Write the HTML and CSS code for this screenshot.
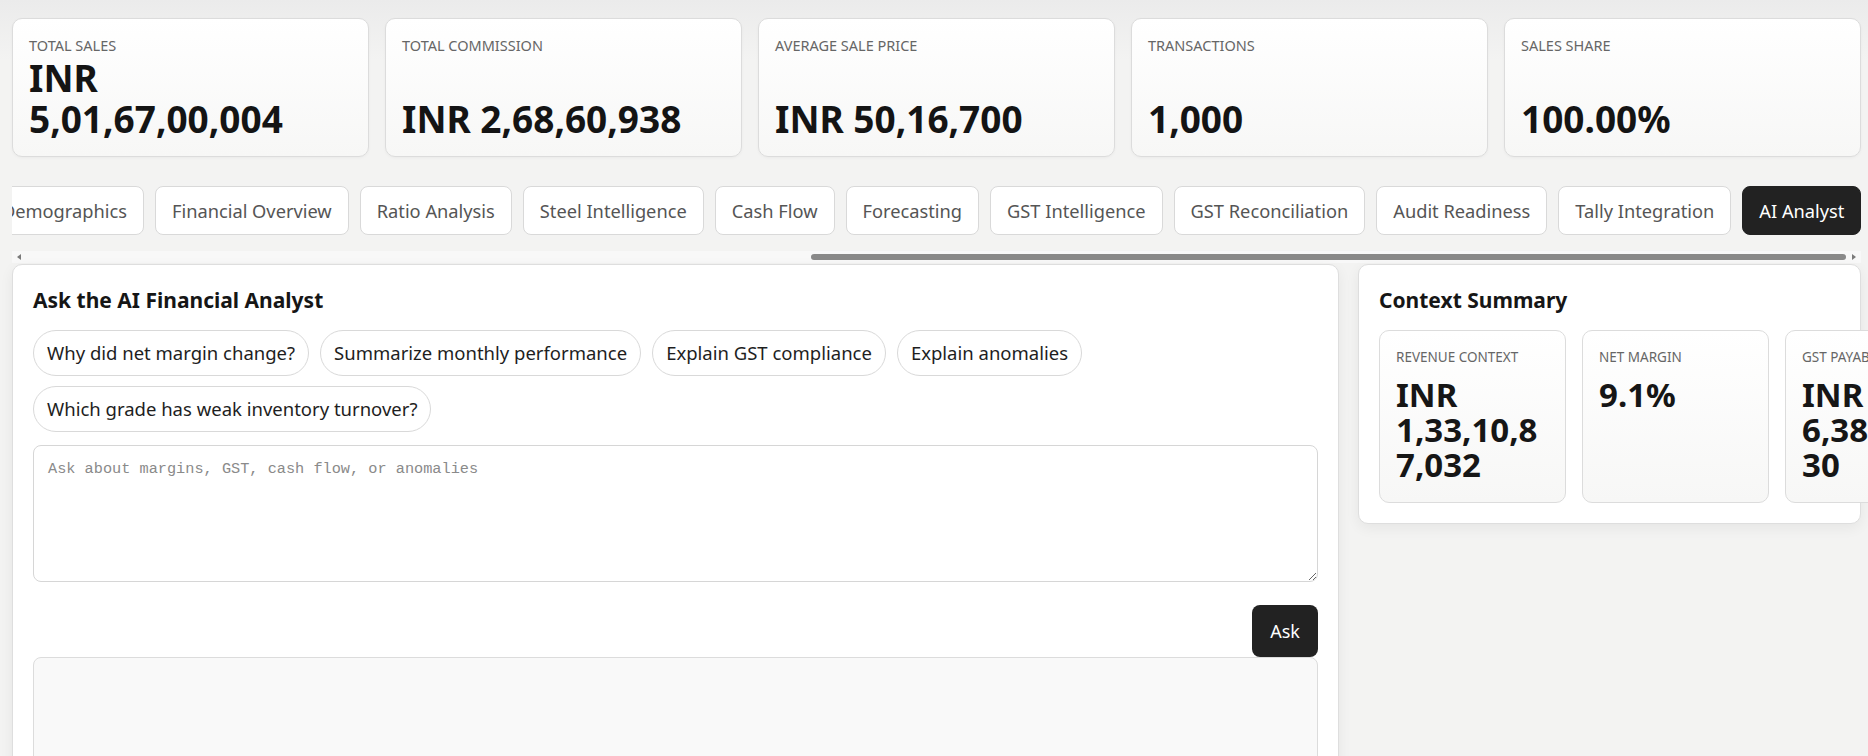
FILE: index.html
```html
<!DOCTYPE html>
<html lang="en">
<head>
    <meta charset="UTF-8">
    <meta name="viewport" content="width=device-width, initial-scale=1.0">
    <title>Sales Dashboard - AI Analyst</title>
    <link rel="stylesheet" href="styles.css">
</head>
<body>
    <div class="metrics">
        <div class="metric">
            <div class="metric-label">Total Sales</div>
            <div class="metric-value">INR<br>5,01,67,00,004</div>
        </div>
        <div class="metric">
            <div class="metric-label">Total Commission</div>
            <div class="metric-value">INR 2,68,60,938</div>
        </div>
        <div class="metric">
            <div class="metric-label">Average Sale Price</div>
            <div class="metric-value">INR 50,16,700</div>
        </div>
        <div class="metric">
            <div class="metric-label">Transactions</div>
            <div class="metric-value">1,000</div>
        </div>
        <div class="metric">
            <div class="metric-label">Sales Share</div>
            <div class="metric-value">100.00%</div>
        </div>
    </div>

    <div class="tab-strip">
        <nav class="tabs" id="tabs">
            <button class="tab">Overview</button>
            <button class="tab">Sales Trends</button>
            <button class="tab">Agent Performance</button>
            <button class="tab">Commission</button>
            <button class="tab">Product Mix</button>
            <button class="tab">Pricing Analysis</button>
            <button class="tab">Regional Analysis</button>
            <button class="tab">Customer Segments</button>
            <button class="tab">Demographics</button>
            <button class="tab">Financial Overview</button>
            <button class="tab">Ratio Analysis</button>
            <button class="tab">Steel Intelligence</button>
            <button class="tab">Cash Flow</button>
            <button class="tab">Forecasting</button>
            <button class="tab">GST Intelligence</button>
            <button class="tab">GST Reconciliation</button>
            <button class="tab">Audit Readiness</button>
            <button class="tab">Tally Integration</button>
            <button class="tab active">AI Analyst</button>
        </nav>
        <div class="scrollbar">
            <span class="arrow arrow-left"></span>
            <div class="track"><div class="thumb" id="thumb"></div></div>
            <span class="arrow arrow-right"></span>
        </div>
    </div>

    <div class="workspace">
        <section class="panel">
            <h2>Ask the AI Financial Analyst</h2>
            <div class="chips">
                <button class="chip">Why did net margin change?</button>
                <button class="chip">Summarize monthly performance</button>
                <button class="chip">Explain GST compliance</button>
                <button class="chip">Explain anomalies</button>
                <button class="chip">Which grade has weak inventory turnover?</button>
            </div>
            <textarea class="question" placeholder="Ask about margins, GST, cash flow, or anomalies"></textarea>
            <div class="ask-row">
                <button class="ask-button">Ask</button>
            </div>
            <div class="answer"></div>
        </section>

        <section class="panel">
            <h2>Context Summary</h2>
            <div class="context-grid">
                <div class="context-card">
                    <div class="context-label">Revenue Context</div>
                    <div class="context-value">INR 1,33,10,87,032</div>
                </div>
                <div class="context-card">
                    <div class="context-label">Net Margin</div>
                    <div class="context-value">9.1%</div>
                </div>
                <div class="context-card">
                    <div class="context-label">GST Payable</div>
                    <div class="context-value">INR 6,38,54,530</div>
                </div>
            </div>
        </section>
    </div>

    <script>
        const tabs = document.getElementById('tabs');
        const thumb = document.getElementById('thumb');

        // sync the scroll indicator with the tab strip
        function updateThumb() {
            const track = thumb.parentElement.clientWidth;
            const ratio = tabs.clientWidth / tabs.scrollWidth;
            thumb.style.width = (track * ratio) + 'px';
            thumb.style.left = (tabs.scrollLeft / tabs.scrollWidth * track) + 'px';
        }

        tabs.addEventListener('scroll', updateThumb);
        // keep the active tab in view
        tabs.scrollLeft = tabs.scrollWidth;
        updateThumb();
    </script>
</body>
</html>
```

FILE: styles.css
```css
html {
    overflow-x: hidden;
}
body {
    margin: 0;
    padding: 18px 7px 0 12px;
    font-family: "Noto Sans", "Open Sans", sans-serif;
    color: #161616;
    background: linear-gradient(to bottom, #ebebeb 0, #f3f3f2 60px, #f3f3f2 100%);
    min-height: 100vh;
    box-sizing: border-box;
}
button {
    font-family: inherit;
}

/* top metric cards */
.metrics {
    display: grid;
    grid-template-columns: repeat(5, minmax(0, 1fr));
    gap: 16px;
}
.metric {
    display: flex;
    flex-direction: column;
    justify-content: space-between;
    gap: 1px;
    padding: 16px 16px 17px;
    border: 1px solid #dcdcdc;
    border-radius: 10px;
    background: linear-gradient(to bottom, #ffffff, #f7f7f6);
    box-shadow: 0 1px 3px rgba(0, 0, 0, 0.04);
}
.metric-label {
    font-size: 14.5px;
    line-height: 21px;
    text-transform: uppercase;
    color: #666;
}
.metric-value {
    font-size: 37px;
    line-height: 41px;
    font-weight: 700;
    color: #141414;
}

/* tab strip */
.tab-strip {
    margin-top: 29px;
}
.tabs {
    display: flex;
    gap: 11px;
    overflow-x: auto;
    scrollbar-width: none;
}
.tabs::-webkit-scrollbar {
    display: none;
}
.tab {
    flex: none;
    padding: 11px 16px;
    font-size: 18.25px;
    line-height: 25px;
    color: #555;
    background: #fff;
    border: 1px solid #d9d9d9;
    border-radius: 8px;
    cursor: pointer;
    white-space: nowrap;
}
.tab.active {
    background: #222;
    border-color: #222;
    color: #fff;
}
.scrollbar {
    display: flex;
    align-items: center;
    height: 12px;
    margin-top: 16px;
    background: #f8f8f8;
}
.arrow {
    flex: none;
    width: 12px;
    height: 12px;
    display: flex;
    align-items: center;
    justify-content: center;
}
.arrow::before {
    content: "";
    border-top: 3px solid transparent;
    border-bottom: 3px solid transparent;
}
.arrow-left::before {
    border-right: 4px solid #7a7a7a;
    margin-left: 2px;
}
.arrow-right::before {
    border-left: 4px solid #7a7a7a;
    margin-right: 2px;
}
.track {
    flex: 1;
    position: relative;
    height: 6px;
    margin: 0 3px 0 0;
}
.thumb {
    position: absolute;
    top: 0;
    height: 6px;
    border-radius: 3px;
    background: #898989;
}

/* analyst + context */
.workspace {
    display: grid;
    grid-template-columns: minmax(0, 1fr) 503px;
    gap: 19px;
    align-items: start;
    margin-top: 1px;
}
.panel {
    padding: 20px;
    background: #fff;
    border: 1px solid #dedede;
    border-radius: 10px;
    box-shadow: 0 4px 14px rgba(0, 0, 0, 0.06);
}
.panel h2 {
    margin: 0 0 15px;
    font-size: 21px;
    line-height: 30px;
    font-weight: 700;
}
.chips {
    display: flex;
    flex-wrap: wrap;
    gap: 10px 11px;
}
.chip {
    padding: 10px 13px;
    font-size: 18.5px;
    line-height: 24px;
    color: #1e1e1e;
    background: #fff;
    border: 1px solid #d9d9d9;
    border-radius: 999px;
    cursor: pointer;
}
.question {
    display: block;
    box-sizing: border-box;
    width: 100%;
    height: 137px;
    margin-top: 13px;
    padding: 14px;
    font-family: "Liberation Mono", "DejaVu Sans Mono", monospace;
    font-size: 15.25px;
    border: 1px solid #d6d6d6;
    border-radius: 8px;
    resize: vertical;
}
.question::placeholder {
    color: #8a8a8a;
}
.ask-row {
    display: flex;
    justify-content: flex-end;
    margin-top: 23px;
}
.ask-button {
    padding: 13px 18px;
    font-size: 18px;
    line-height: 26px;
    color: #fff;
    background: #222;
    border: none;
    border-radius: 8px;
    cursor: pointer;
}
.answer {
    min-height: 220px;
    background: #f9f9f9;
    border: 1px solid #dcdcdc;
    border-radius: 8px;
}

.context-grid {
    display: grid;
    grid-template-columns: repeat(3, 187px);
    gap: 16px;
}
.context-card {
    padding: 16px 16px 20px;
    border: 1px solid #dcdcdc;
    border-radius: 10px;
    background: linear-gradient(to bottom, #ffffff, #f7f7f6);
}
.context-label {
    font-size: 13.5px;
    line-height: 20px;
    text-transform: uppercase;
    color: #666;
    white-space: nowrap;
    margin-bottom: 10px;
}
.context-value {
    font-size: 33px;
    line-height: 35px;
    font-weight: 700;
    overflow-wrap: anywhere;
}
```
